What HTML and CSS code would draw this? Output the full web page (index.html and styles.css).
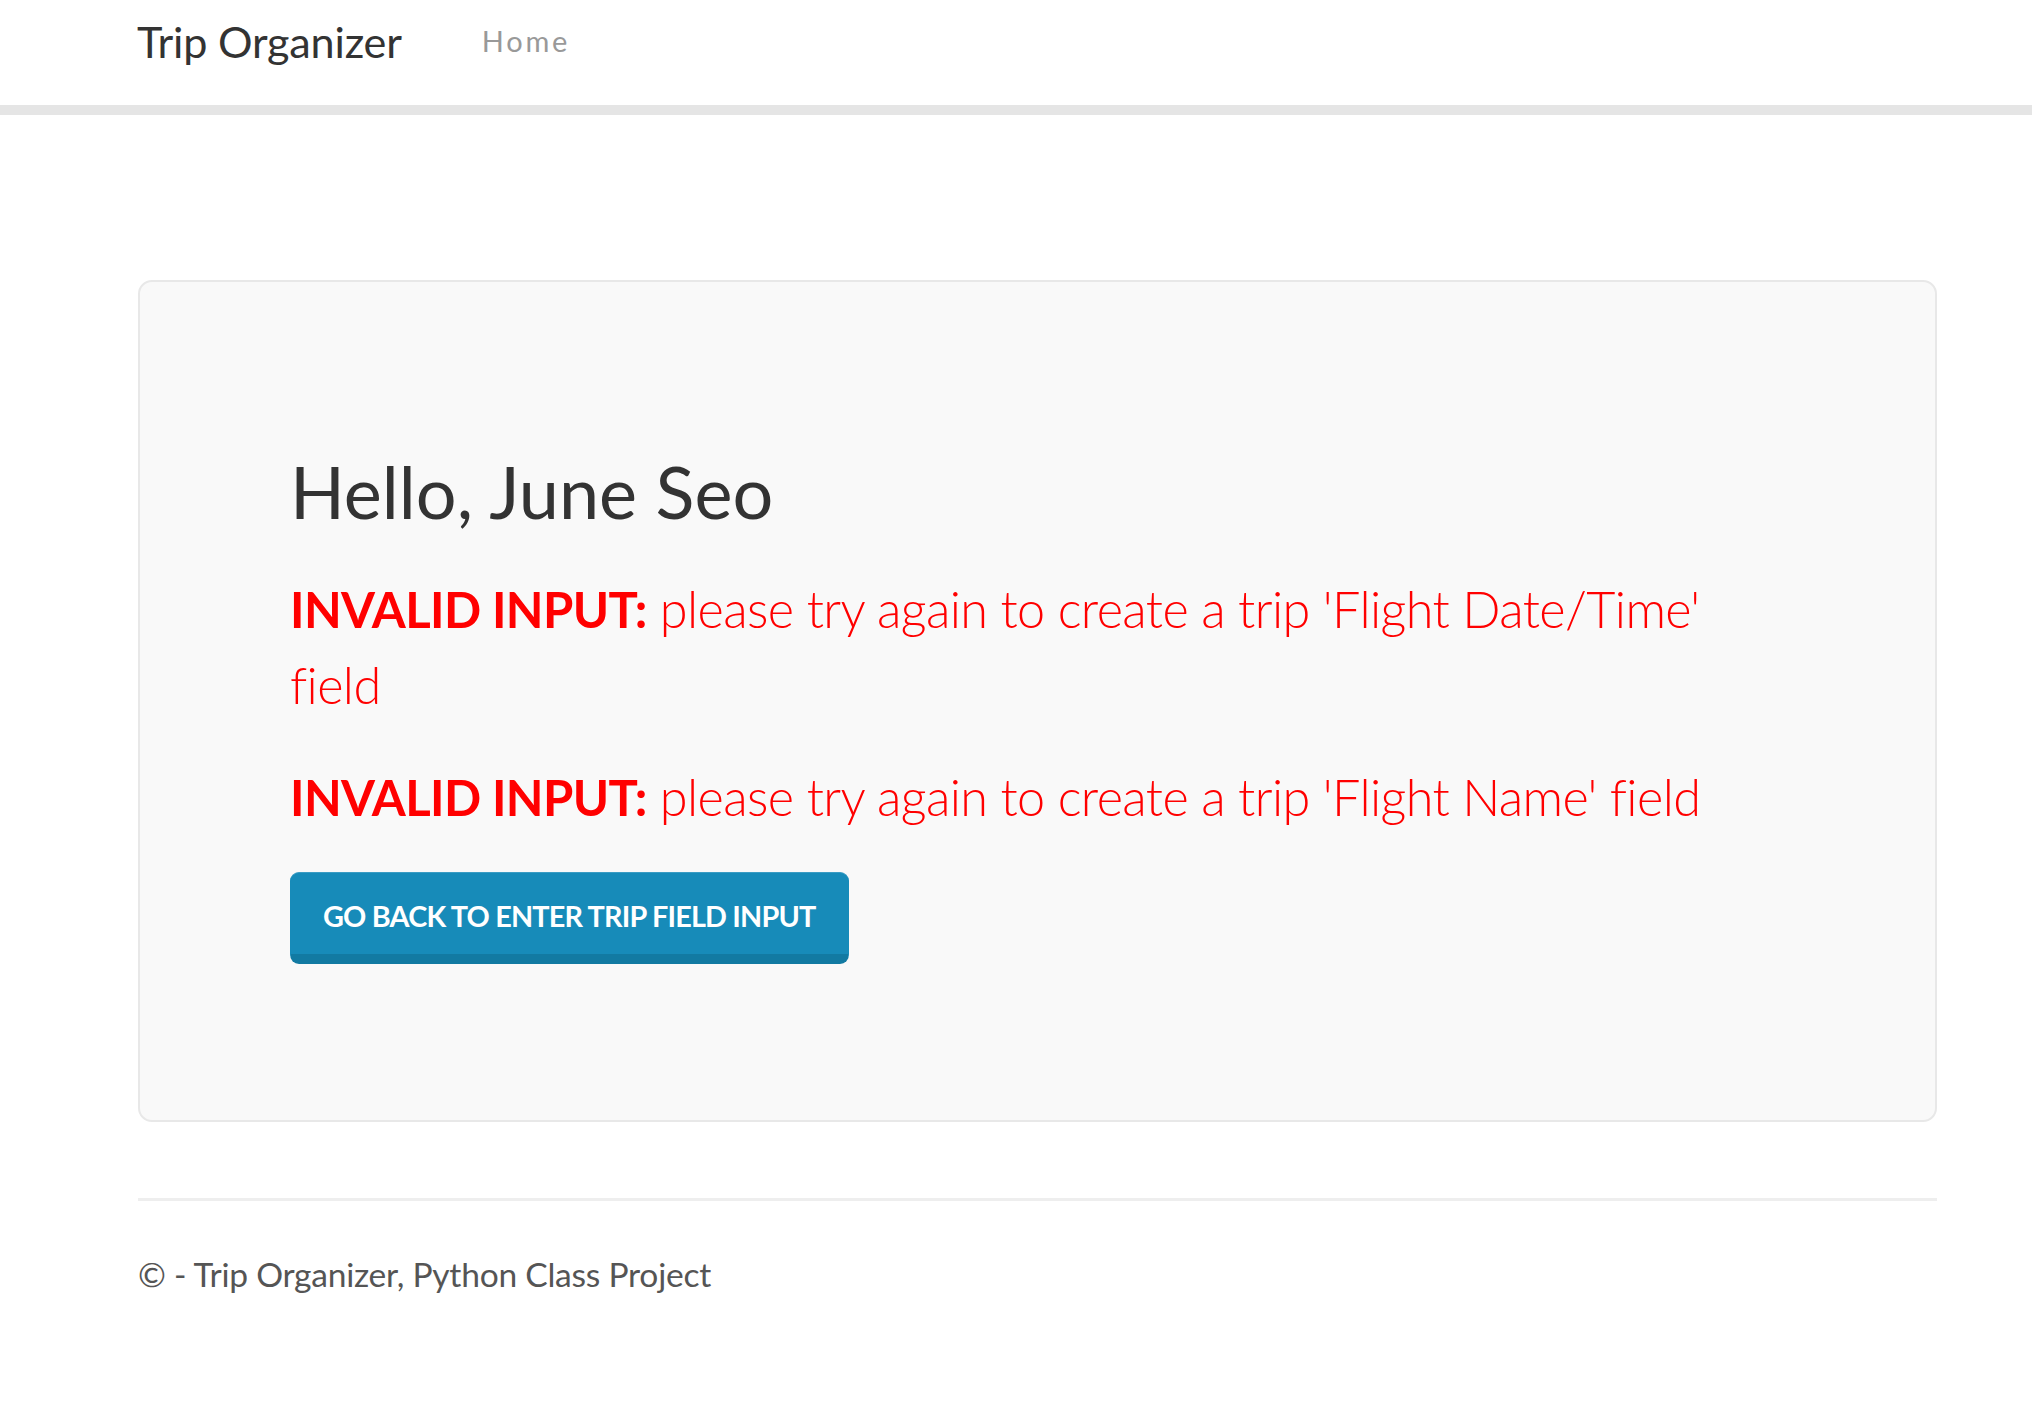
FILE: index.html
```html
<!DOCTYPE html>
<html lang="en">
<head>
<meta charset="utf-8">
<title>Trip Organizer</title>
<link rel="stylesheet" href="styles.css">
</head>
<body>
<nav class="navbar">
  <div class="navbar-inner">
    <a class="brand" href="#">Trip Organizer</a>
    <a class="nav-link" href="#">Home</a>
  </div>
</nav>
<div class="container">
  <div class="jumbotron">
    <h2 class="greeting">Hello, June Seo</h2>
    <p class="error"><strong>INVALID INPUT:</strong> please try again to create a trip 'Flight Date/Time' field</p>
    <p class="error"><strong>INVALID INPUT:</strong> please try again to create a trip 'Flight Name' field</p>
    <div class="actions">
      <a class="btn-primary" href="#">Go back to enter trip field input</a>
    </div>
  </div>
  <hr class="rule">
  <footer class="footer">
    <p>&copy; - Trip Organizer, Python Class Project</p>
  </footer>
</div>
</body>
</html>
```
FILE: styles.css
```css
* { box-sizing: border-box; }
html, body { margin: 0; padding: 0; background: #fff; }
body {
  font-family: "Lato", "Open Sans", sans-serif;
  color: #555;
}
a { text-decoration: none; }

.navbar {
  height: 115px;
  background: #fff;
  border-bottom: 10px solid #e5e5e5;
}
.navbar-inner {
  display: flex;
  align-items: flex-start;
  padding-left: 137px;
}
.brand {
  font-size: 43.2px;
  line-height: 54px;
  padding-top: 14px;
  color: #333;
  letter-spacing: -0.2px;
}
.nav-link {
  font-size: 29px;
  line-height: 36px;
  padding-top: 23px;
  margin-left: 80px;
  color: #999;
  letter-spacing: 2.8px;
}

.container {
  width: 1799px;
  margin-left: 138px;
}
.jumbotron {
  margin-top: 165px;
  background: #f9f9f9;
  border: 2px solid #e8e8e8;
  border-radius: 14px;
  padding: 120px 150px 120px 150px;
}
.greeting {
  margin: 50px 0 40px;
  font-size: 72px;
  line-height: 79.2px;
  font-weight: 400;
  color: #333;
}
.error {
  margin: 0 0 37px;
  font-size: 50.4px;
  line-height: 75px;
  font-weight: 300;
  color: #ff0000;
  letter-spacing: -0.6px;
}
.error strong {
  font-size: 49px;
  font-weight: 700;
}
.actions {
  display: flex;
  margin-top: 9px;
  margin-bottom: 36px;
}
.btn-primary {
  display: block;
  padding: 23px 32px 18px;
  font-size: 28.8px;
  line-height: 40px;
  font-weight: 700;
  text-transform: uppercase;
  letter-spacing: -0.8px;
  color: #fff;
  background: #178bb9;
  border: 1px solid #178bb9;
  border-top-color: #3a9cc4;
  border-bottom: 10px solid #127aa2;
  border-radius: 9px;
}

.rule {
  margin: 76px 0 0;
  border: 0;
  border-top: 3px solid #eeeeee;
  height: 0;
}
.footer p {
  margin: 49px 0 0;
  font-size: 33.6px;
  line-height: 48px;
  color: #555;
  letter-spacing: -0.25px;
}
```
